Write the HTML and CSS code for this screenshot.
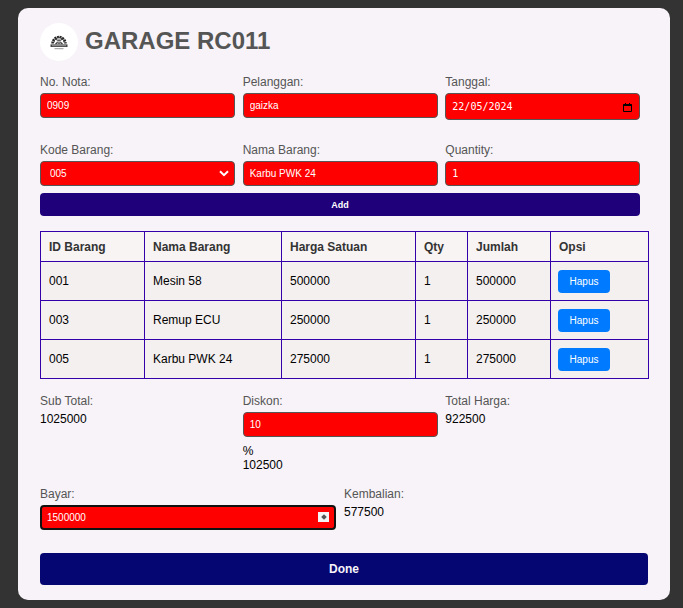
FILE: index.html
```html
<!DOCTYPE html>
<html lang="id">
<head>
<meta charset="utf-8">
<title>Garage RC011</title>
<link rel="stylesheet" href="styles.css">
</head>
<body>
<main class="card">
  <header class="brand">
    <span class="logo">
      <svg width="20" height="18" viewBox="0 0 20 18" aria-hidden="true">
        <path d="M3.6 10.5 A6.4 6.4 0 0 1 16.4 10.5" fill="none" stroke="#222" stroke-width="2.6" stroke-dasharray="1.9 0.7"/>
        <path d="M5 9.5 A5 5 0 0 1 15 9.5" fill="none" stroke="#444" stroke-width="1"/>
        <path d="M6.5 5.5 L13.5 11 M13.5 5.5 L6.5 11" stroke="#333" stroke-width="1.3"/>
        <circle cx="10" cy="7.5" r="2.4" fill="#bbb"/>
        <circle cx="9.1" cy="7.4" r="0.6" fill="#222"/>
        <circle cx="10.9" cy="7.4" r="0.6" fill="#222"/>
        <rect x="8.6" y="9.4" width="2.8" height="1.6" fill="#666"/>
        <rect x="1.5" y="11.4" width="17" height="2.6" fill="#444"/>
        <rect x="3" y="12.2" width="14" height="1" fill="#999"/>
        <rect x="5.5" y="15.2" width="9" height="1" fill="#999"/>
      </svg>
    </span>
    <h1 class="title">GARAGE RC011</h1>
  </header>

  <section class="row thirds">
    <div class="field">
      <label class="label">No. Nota:</label>
      <input class="control" type="text" value="0909">
    </div>
    <div class="field">
      <label class="label">Pelanggan:</label>
      <input class="control" type="text" value="gaizka">
    </div>
    <div class="field">
      <label class="label">Tanggal:</label>
      <div class="control-wrap">
        <input class="control date" type="text" value="22/05/2024">
        <svg class="calendar" width="9" height="9" viewBox="0 0 9 9" aria-hidden="true"><path d="M0.5 1.5 H8.5 V8.5 H0.5 Z" fill="none" stroke="#000"/><rect x="0.5" y="1" width="8" height="2" fill="#000"/><rect x="2" y="0" width="1" height="1" fill="#000"/><rect x="6" y="0" width="1" height="1" fill="#000"/></svg>
      </div>
    </div>
  </section>

  <section class="row thirds second">
    <div class="field">
      <label class="label">Kode Barang:</label>
      <div class="control-wrap">
        <select class="control select"><option>005</option></select>
        <svg class="chevron" width="10" height="7" viewBox="0 0 10 7" aria-hidden="true"><path d="M1 1.2 L5 5.2 L9 1.2" fill="none" stroke="#fff" stroke-width="2"/></svg>
      </div>
    </div>
    <div class="field">
      <label class="label">Nama Barang:</label>
      <input class="control" type="text" value="Karbu PWK 24">
    </div>
    <div class="field">
      <label class="label">Quantity:</label>
      <input class="control qty" type="text" value="1">
    </div>
  </section>

  <button class="add" type="button">Add</button>

  <table class="items">
    <colgroup>
      <col class="c1"><col class="c2"><col class="c3"><col class="c4"><col class="c5"><col class="c6">
    </colgroup>
    <thead>
      <tr><th>ID Barang</th><th>Nama Barang</th><th>Harga Satuan</th><th>Qty</th><th>Jumlah</th><th>Opsi</th></tr>
    </thead>
    <tbody>
      <tr><td>001</td><td>Mesin 58</td><td>500000</td><td>1</td><td>500000</td><td><button class="del" type="button">Hapus</button></td></tr>
      <tr><td>003</td><td>Remup ECU</td><td>250000</td><td>1</td><td>250000</td><td><button class="del" type="button">Hapus</button></td></tr>
      <tr><td>005</td><td>Karbu PWK 24</td><td>275000</td><td>1</td><td>275000</td><td><button class="del" type="button">Hapus</button></td></tr>
    </tbody>
  </table>

  <section class="row thirds totals">
    <div class="field">
      <span class="label">Sub Total:</span>
      <span class="value">1025000</span>
    </div>
    <div class="field">
      <label class="label">Diskon:</label>
      <input class="control" type="text" value="10">
      <span class="value percent">%</span>
      <span class="value">102500</span>
    </div>
    <div class="field">
      <span class="label">Total Harga:</span>
      <span class="value">922500</span>
    </div>
  </section>

  <section class="row halves">
    <div class="field">
      <label class="label">Bayar:</label>
      <div class="control-wrap">
        <input class="control pay" type="number" value="1500000">
        <span class="spin"><span class="spin-dot"></span></span>
      </div>
    </div>
    <div class="field">
      <span class="label">Kembalian:</span>
      <span class="value">577500</span>
    </div>
  </section>

  <button class="done" type="button">Done</button>
</main>
</body>
</html>
```

FILE: styles.css
```css
* { box-sizing: border-box; }

html, body { height: 100%; }

body {
  margin: 0;
  padding: 8px 13px 8px 18px;
  background: #333;
  font-family: "Liberation Sans", Arial, sans-serif;
  overflow: hidden;
}

.card {
  height: 592px;
  padding: 15px 22px;
  background: #f7f3f8;
  border-radius: 10px;
}

.brand {
  display: flex;
  align-items: center;
  gap: 7px;
  height: 38px;
}

.logo {
  display: flex;
  align-items: center;
  justify-content: center;
  width: 38px;
  height: 38px;
  border-radius: 50%;
  background: #fff;
}

.title {
  margin: 0 0 3px;
  font-size: 24px;
  font-weight: 700;
  color: #555;
}

.row { display: grid; }

.thirds { grid-template-columns: repeat(3, 1fr); margin-top: 14px; }

.halves { grid-template-columns: repeat(2, 1fr); margin-top: 15px; }

.second { margin-top: 23px; }

.field {
  display: flex;
  flex-direction: column;
  align-items: flex-start;
  min-width: 0;
}

.label {
  font-size: 12px;
  line-height: 14px;
  color: #555;
  margin-bottom: 4px;
}

.control {
  display: block;
  width: calc(100% - 7.7px);
  height: 25px;
  padding: 0 6px;
  border: 1px solid #555;
  border-radius: 4px;
  background: #f00;
  color: #fff;
  font-family: "Liberation Sans", Arial, sans-serif;
  font-size: 10px;
}

.control-wrap {
  position: relative;
  width: 100%;
}

.date {
  height: 27px;
  font-family: "DejaVu Sans Mono", monospace;
  font-size: 10px;
}

.calendar {
  position: absolute;
  top: 10px;
  right: 16px;
}

.qty { font-family: "DejaVu Sans Mono", monospace; }

.select {
  padding-left: 9px;
  appearance: none;
}

.chevron {
  position: absolute;
  top: 9px;
  right: 14px;
}

.add {
  display: block;
  width: calc(100% - 8px);
  height: 23px;
  margin-top: 7px;
  padding: 0;
  border: 0;
  border-radius: 4px;
  background: #1f007a;
  color: #fff;
  font-family: "Liberation Sans", Arial, sans-serif;
  font-size: 9px;
  font-weight: 700;
}

.items {
  width: 607.5px;
  height: 148px;
  margin-top: 15px;
  table-layout: fixed;
  border-collapse: collapse;
  font-size: 12px;
}

.c1 { width: 104px; }
.c2 { width: 137px; }
.c3 { width: 134px; }
.c4 { width: 52px; }
.c5 { width: 83px; }
.c6 { width: 97.5px; }

.items th, .items td {
  padding: 0 8px;
  border: 1px solid #3300aa;
  text-align: left;
}

.items td:last-child { padding-left: 7px; }

.items th {
  height: 30px;
  background: #f8f4f4;
  color: #333;
  font-weight: 700;
}

.items td {
  height: 39px;
  background: #f4f0f0;
  color: #000;
}

.del {
  display: block;
  width: 52px;
  height: 23px;
  padding: 0;
  border: 0;
  border-radius: 4px;
  background: #007bff;
  color: #fff;
  font-family: "Liberation Sans", Arial, sans-serif;
  font-size: 10px;
}

.value {
  font-size: 12px;
  line-height: 14px;
  color: #000;
}

.totals { margin-top: 15px; }

.percent { margin-top: 7px; }

.pay {
  border: 2px solid #111;
  outline: none;
  font-size: 10px;
  padding-left: 5px;
  appearance: textfield;
}

.pay::-webkit-inner-spin-button,
.pay::-webkit-outer-spin-button {
  appearance: none;
  margin: 0;
}

.spin {
  position: absolute;
  top: 7px;
  right: 15px;
  display: flex;
  align-items: center;
  justify-content: center;
  width: 11px;
  height: 10px;
  background: #f4f4f4;
}

.spin-dot {
  width: 4px;
  height: 4px;
  background: #555;
  transform: rotate(45deg);
}

.done {
  display: block;
  width: 100%;
  height: 32px;
  margin-top: 23px;
  border: 0;
  border-radius: 4px;
  background: #060672;
  color: #f7f3f8;
  font-family: "Liberation Sans", Arial, sans-serif;
  font-size: 12px;
  font-weight: 700;
}
```
